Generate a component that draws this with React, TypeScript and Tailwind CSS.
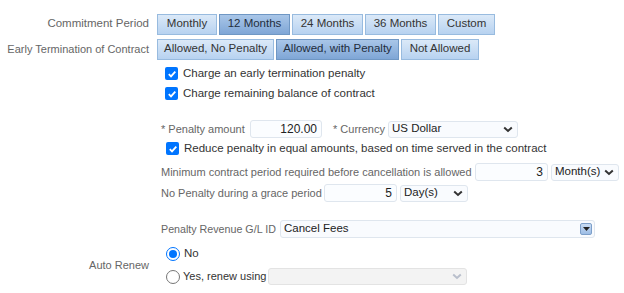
import React from 'react';

const Btn = ({ label, active, w }: { label: string; active?: boolean; w: string }) => (
  <div
    className={`${w} h-[21px] flex items-center justify-center border whitespace-nowrap ${
      active
        ? 'border-[#6f97c4] bg-gradient-to-b from-[#a9c6e8] to-[#7fa6d6] text-[#1f2d3d]'
        : 'border-[#98bbdf] bg-gradient-to-b from-[#dbe9f8] to-[#b7d2f0] text-[#333]'
    }`}
  >
    {label}
  </div>
);

const Check = () => (
  <div className="w-[13px] h-[13px] rounded-[2px] bg-[#0075ff] flex items-center justify-center shrink-0">
    <svg width="10" height="10" viewBox="0 0 10 10">
      <path d="M1.8 5.2 L4 7.4 L8.3 2.6" stroke="white" strokeWidth="1.8" fill="none" />
    </svg>
  </div>
);

const Chevron = ({ color = '#333' }: { color?: string }) => (
  <svg width="10" height="7" viewBox="0 0 10 7" className="shrink-0">
    <path d="M1.2 1.5 L5 5 L8.8 1.5" stroke={color} strokeWidth="2" fill="none" />
  </svg>
);

const Field = ({ w, value }: { w: string; value: string }) => (
  <div className={`${w} h-[18px] border border-[#dfe6ee] rounded-[3px] bg-[#fbfdff] flex items-center justify-end pr-[4px] text-[12px] text-[#222]`}>
    {value}
  </div>
);

const Select = ({ w, value, disabled }: { w: string; value: string; disabled?: boolean }) => (
  <div
    className={`${w} h-[17px] border rounded-[3px] flex items-center justify-between pl-[3px] pr-[4px] text-[11.5px] whitespace-nowrap ${
      disabled ? 'border-[#e3e3e3] bg-[#f3f3f3]' : 'border-[#dfe6ee] bg-[#f9fbfe] text-[#222]'
    }`}
  >
    <span>{value}</span>
    <Chevron color={disabled ? '#b9bfcc' : '#333'} />
  </div>
);

export default function App() {
  return (
    <div
      className="w-[624px] h-[293px] bg-white text-[11px] text-[#333] whitespace-nowrap"
      style={{ fontFamily: '"Liberation Sans", Arial, sans-serif' }}
    >
      <div className="pt-[13px] flex flex-col">
        {/* Commitment period */}
        <div className="flex items-center h-[22px]">
          <div className="w-[149px] text-right text-[#666] text-[11.5px]">Commitment Period</div>
          <div className="flex gap-[2px] ml-[8px] text-[11.5px]">
            <Btn label="Monthly" w="w-[60px]" />
            <Btn label="12 Months" w="w-[71px]" active />
            <Btn label="24 Months" w="w-[71px]" />
            <Btn label="36 Months" w="w-[71px]" />
            <Btn label="Custom" w="w-[57px]" />
          </div>
        </div>

        {/* Early termination */}
        <div className="flex items-center h-[22px] mt-[3px]">
          <div className="w-[149px] text-right text-[#666] text-[11px]">Early Termination of Contract</div>
          <div className="flex gap-[2px] ml-[8px] text-[11.5px]">
            <Btn label="Allowed, No Penalty" w="w-[117px]" />
            <Btn label="Allowed, with Penalty" w="w-[123px]" active />
            <Btn label="Not Allowed" w="w-[78px]" />
          </div>
        </div>

        <div className="ml-[165px] mt-[7px] flex flex-col gap-[7px] text-[11.5px]">
          <div className="flex items-center gap-[5px] h-[13px]">
            <Check />
            <span>Charge an early termination penalty</span>
          </div>
          <div className="flex items-center gap-[5px] h-[13px]">
            <Check />
            <span>Charge remaining balance of contract</span>
          </div>
        </div>

        <div className="ml-[161px] mt-[20px] flex flex-col">
          <div className="flex items-center h-[18px]">
            <span className="text-[#666] w-[89px]">* Penalty amount</span>
            <Field w="w-[72px]" value="120.00" />
            <span className="text-[#666] ml-[11px] w-[55px]">* Currency</span>
            <Select w="w-[130px]" value="US Dollar" />
          </div>

          <div className="flex items-center gap-[5px] h-[13px] mt-[4px] ml-[5px] text-[11.5px]">
            <Check />
            <span>Reduce penalty in equal amounts, based on time served in the contract</span>
          </div>

          <div className="flex items-center h-[18px] mt-[8px]">
            <span className="text-[#666] w-[314px]">Minimum contract period required before cancellation is allowed</span>
            <Field w="w-[73px]" value="3" />
            <div className="ml-[3px]">
              <Select w="w-[68px]" value="Month(s)" />
            </div>
          </div>

          <div className="flex items-center h-[18px] mt-[3px]">
            <span className="text-[#666] w-[163px]">No Penalty during a grace period</span>
            <Field w="w-[73px]" value="5" />
            <div className="ml-[3px]">
              <Select w="w-[68px]" value="Day(s)" />
            </div>
          </div>

          <div className="flex items-center h-[18px] mt-[18px]">
            <span className="text-[#666] w-[119px] text-[10.7px]">Penalty Revenue G/L ID</span>
            <div className="w-[315px] h-[18px] border border-[#dfe6ee] rounded-[3px] bg-[#f9fbfe] flex items-center justify-between pl-[3px] pr-[2px] text-[11.5px] text-[#222]">
              <span>Cancel Fees</span>
              <div className="w-[12px] h-[12px] rounded-[2px] border border-[#7d9fc9] bg-gradient-to-b from-[#c9dcf3] to-[#9dbde5] flex items-center justify-center">
                <svg width="7" height="4" viewBox="0 0 7 4"><path d="M0 0 H7 L3.5 4 Z" fill="#222" /></svg>
              </div>
            </div>
          </div>
        </div>

        {/* Auto renew */}
        <div className="flex items-center mt-[8px]">
          <div className="w-[149px] text-right text-[#666]">Auto Renew</div>
          <div className="ml-[17px] flex flex-col gap-[6px] text-[11.5px]">
            <div className="flex items-center gap-[4px] h-[16px]">
              <div className="w-[14px] h-[14px] rounded-full border-[1.5px] border-[#0075ff] flex items-center justify-center">
                <div className="w-[8px] h-[8px] rounded-full bg-[#0075ff]" />
              </div>
              <span>No</span>
            </div>
            <div className="flex items-center h-[17px]">
              <div className="w-[14px] h-[14px] rounded-full border border-[#767676]" />
              <span className="ml-[3px] w-[85px] text-[11px]">Yes, renew using</span>
              <Select w="w-[199px]" value="" disabled />
            </div>
          </div>
        </div>
      </div>
    </div>
  );
}
